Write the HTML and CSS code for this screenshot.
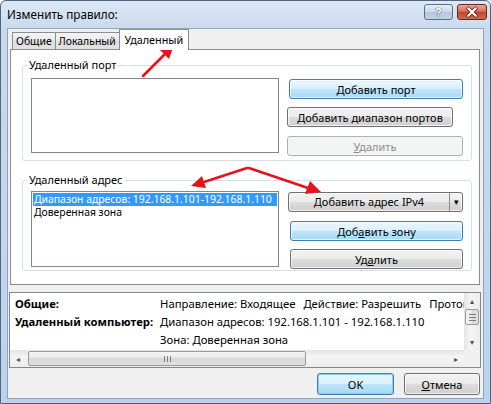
FILE: index.html
```html
<!DOCTYPE html>
<html lang="ru">
<head>
    <meta charset="UTF-8">
    <title>Изменить правило</title>
    <link rel="stylesheet" href="styles.css">
</head>
<body>
    <div class="window">
        <div class="titlebar">
            <span class="title">Изменить правило:</span>
            <div class="caption-buttons">
                <span class="cap-btn help">?</span>
                <span class="cap-btn close">
                    <svg width="30" height="16" viewBox="0 0 30 16">
                        <path d="M11 4 L19 12 M19 4 L11 12" stroke="#6b1d12" stroke-width="4.2" stroke-linecap="round"/>
                        <path d="M11 4 L19 12 M19 4 L11 12" stroke="#fff" stroke-width="2.4" stroke-linecap="round"/>
                    </svg>
                </span>
            </div>
        </div>

        <div class="client">
            <div class="tabs">
                <span class="tab">Общие</span>
                <span class="tab">Локальный</span>
                <span class="tab active">Удаленный</span>
            </div>

            <div class="tab-page">
                <fieldset class="group group-port">
                    <legend>Удаленный порт</legend>
                    <div class="group-body">
                        <div class="listbox"></div>
                        <div class="btn-col">
                            <button class="btn hot first">Добавить порт</button>
                            <button class="btn narrow"><u>Д</u>обавить диапазон портов</button>
                            <button class="btn last" disabled><u>У</u>далить</button>
                        </div>
                    </div>
                </fieldset>

                <fieldset class="group group-addr">
                    <legend>Удаленный адрес</legend>
                    <div class="group-body">
                        <div class="listbox">
                            <div class="item selected">Диапазон адресов: 192.168.1.101-192.168.1.110</div>
                            <div class="item">Доверенная зона</div>
                        </div>
                        <div class="btn-col">
                            <button class="btn split first">
                                <span class="split-main">Добавить адрес IPv4</span>
                                <span class="split-drop">&#9662;</span>
                            </button>
                            <button class="btn hot">Доб<u>а</u>вить зону</button>
                            <button class="btn last">Уд<u>а</u>лить</button>
                        </div>
                    </div>
                </fieldset>
            </div>

            <div class="summary">
                <div class="summary-rows">
                    <div class="row">
                        <span class="label">Общие:</span>
                        <span class="value">Направление: Входящее</span>
                        <span class="value">Действие: Разрешить</span>
                        <span class="value">Протокол: Любой</span>
                    </div>
                    <div class="row">
                        <span class="label">Удаленный компьютер:</span>
                        <span class="value">Диапазон адресов: 192.168.1.101 - 192.168.1.110</span>
                    </div>
                    <div class="row">
                        <span class="label"></span>
                        <span class="value">Зона: Доверенная зона</span>
                    </div>
                </div>
                <div class="vscroll">
                    <span class="arrow">&#9652;</span>
                    <span class="vthumb"><i></i><i></i><i></i></span>
                    <span class="vtrack"></span>
                    <span class="arrow">&#9662;</span>
                </div>
                <div class="hscroll">
                    <span class="arrow">&#9666;</span>
                    <span class="hthumb"><i></i><i></i><i></i></span>
                    <span class="htrack"></span>
                    <span class="arrow">&#9656;</span>
                </div>
                <div class="corner"></div>
            </div>

            <div class="dialog-buttons">
                <button class="btn hot ok">OK</button>
                <button class="btn cancel"><u>О</u>тмена</button>
            </div>
        </div>

        <!-- пометки поверх окна -->
        <svg class="marks" width="491" height="404" viewBox="0 0 491 404">
            <g stroke="#e3151b" stroke-width="2.6" stroke-linecap="round" fill="none">
                <path d="M143 76 L165 54"/>
                <path d="M247 168 L204 182"/>
                <path d="M249 168 L308 188"/>
            </g>
            <g fill="#e3151b">
                <polygon points="174,45 169,59 160,50"/>
                <polygon points="191,186 206,188 202,176"/>
                <polygon points="321,192 305,194 310,181"/>
            </g>
        </svg>
    </div>
</body>
</html>
```

FILE: styles.css
```css
* {
    box-sizing: border-box;
}
body {
    margin: 0;
    font-family: "Noto Sans", "Open Sans", sans-serif;
    font-size: 11px;
    color: #000;
    background: #fff;
}
.window {
    position: relative;
    width: 491px;
    height: 404px;
    display: flex;
    flex-direction: column;
    padding: 0 6px 4px 6px;
    border: 1px solid #4f6680;
    border-radius: 6px 6px 0 0;
    background: linear-gradient(#dde8f4, #c9daee 28px, #bcd2ec);
}

/* заголовок */
.titlebar {
    height: 27px;
    display: flex;
    justify-content: space-between;
    align-items: flex-start;
}
.title {
    font-size: 11.7px;
    line-height: 18px;
    padding-top: 4px;
}
.caption-buttons {
    display: flex;
    gap: 4px;
    margin-top: 3px;
    margin-right: -3px;
}
.cap-btn {
    height: 16px;
    border: 1px solid #5b6f87;
    border-radius: 3px;
    display: flex;
    align-items: center;
    justify-content: center;
}
.help {
    width: 29px;
    background: linear-gradient(#e6eef7, #c9d7e8 50%, #b4c6dd 50%, #c3d3e6);
    color: #fff;
    font-weight: bold;
    font-size: 12px;
    text-shadow: 0 0 1px #2d3e55, 0 0 1px #2d3e55;
}
.close {
    width: 30px;
    border-color: #6a2318;
    background: linear-gradient(#e9a99c, #d5725d 45%, #c4432c 50%, #d26a50);
}

/* рабочая область */
.client {
    flex: 1;
    display: flex;
    flex-direction: column;
    padding: 0 3px 3px 2px;
    background: #f0f0f0;
    border: 1px solid #8ea4bd;
}
.tabs {
    height: 20px;
    display: flex;
    align-items: flex-end;
    padding-left: 2px;
}
.tab {
    height: 17px;
    line-height: 16px;
    padding: 0 3px;
    margin-right: -1px;
    font-size: 10.4px;
    border: 1px solid #898c95;
    border-bottom: none;
    background: linear-gradient(#f4f4f4, #e9e9e9 50%, #dedede 50%, #e2e2e2);
}
.tab.active {
    position: relative;
    z-index: 1;
    height: 21px;
    margin-bottom: -1px;
    padding: 0 5px;
    line-height: 19px;
    font-size: 10.8px;
    background: #fff;
}
.tab-page {
    height: 236px;
    display: flex;
    flex-direction: column;
    gap: 11px;
    padding: 7px 7px 0 11px;
    background: #fff;
    border: 1px solid #898c95;
}

/* группы */
.group {
    margin: 0;
    min-width: 0;
    padding: 0 8px;
    border: 1px solid #d5dfe5;
    border-radius: 3px;
}
.group legend {
    font-size: 11px;
    line-height: 16px;
    padding: 0 2px;
    margin-left: -4px;
}
.group-port {
    padding-top: 5px;
    padding-bottom: 4px;
}
.group-addr {
    padding-top: 3px;
    padding-bottom: 1px;
}
.group-body {
    height: 78px;
    display: flex;
}
.listbox {
    width: 248px;
    height: 75px;
    padding: 1px;
    overflow: hidden;
    background: #fff;
    border: 1px solid #828790;
}
.group-addr .listbox {
    height: 76px;
}
.item {
    height: 13px;
    line-height: 13px;
    padding-left: 1px;
    font-size: 10.4px;
    white-space: nowrap;
}
.item.selected {
    background: #3399ff;
    color: #fff;
}
.btn-col {
    width: 176px;
    margin-left: 8px;
    display: flex;
    flex-direction: column;
}
.group-addr .btn-col {
    width: 173px;
    margin-left: 11px;
}

/* кнопки */
.btn {
    height: 20px;
    padding: 0;
    font: inherit;
    color: #000;
    border: 1px solid #707070;
    border-radius: 3px;
    background: linear-gradient(#f2f2f2, #ebebeb 50%, #dddddd 50%, #cfcfcf);
    box-shadow: inset 0 0 0 1px rgba(255, 255, 255, 0.7);
}
.btn.hot {
    border-color: #3c7fb1;
    background: linear-gradient(#eaf6fd, #d9f0fc 50%, #bee6fd 50%, #a7d9f5);
}
.btn:disabled {
    color: #8c8c8c;
    border-color: #adb2b5;
    background: #f4f4f4;
    box-shadow: none;
}
.btn-col .btn + .btn {
    margin-top: 8px;
}
.btn-col .first {
    margin-top: 1px;
}
.group-port .first {
    margin-left: 2px;
}
.group-port .narrow {
    margin-right: 10px;
}
.group-port .last,
.group-addr .hot {
    margin-top: 9px !important;
}
.group-addr .first {
    margin-left: -2px;
}
.split {
    display: flex;
    align-items: stretch;
}
.split-main {
    flex: 1;
    line-height: 18px;
    text-align: center;
}
.split-drop {
    width: 13px;
    line-height: 18px;
    font-size: 9px;
    text-align: center;
    border-left: 1px solid #8a8a8a;
}

/* сводка */
.summary {
    height: 76px;
    margin: 7px -1px 0 -1px;
    display: grid;
    grid-template-columns: minmax(0, 1fr) 16px;
    grid-template-rows: minmax(0, 1fr) 17px;
    font-size: 11.3px;
    background: #fff;
    border: 1px solid #828790;
}
.summary-rows {
    overflow: hidden;
    padding: 1px 0 0 5px;
    white-space: nowrap;
}
.row {
    height: 18px;
    display: flex;
    align-items: center;
}
.label {
    flex: none;
    width: 145px;
    font-weight: bold;
}
.value {
    flex: none;
    margin-right: 8px;
}
.vscroll {
    display: flex;
    flex-direction: column;
    align-items: center;
    background: linear-gradient(90deg, #e4e4e4, #f4f4f4 40%, #ececec);
}
.hscroll {
    display: flex;
    align-items: center;
    background: linear-gradient(#e4e4e4, #f4f4f4 40%, #ececec);
}
.arrow {
    flex: none;
    width: 16px;
    height: 16px;
    line-height: 16px;
    font-size: 8px;
    text-align: center;
    color: #505050;
}
.vthumb,
.hthumb {
    display: flex;
    align-items: center;
    justify-content: center;
    gap: 2px;
    border: 1px solid #9a9a9a;
    border-radius: 2px;
}
.vthumb {
    width: 14px;
    height: 16px;
    flex-direction: column;
    background: linear-gradient(90deg, #f6f6f6, #e6e6e6 50%, #d8d8d8 50%, #e0e0e0);
}
.vthumb i {
    width: 7px;
    height: 1px;
    background: #7c7c7c;
}
.hthumb {
    width: 278px;
    height: 15px;
    margin-left: 2px;
    background: linear-gradient(#f6f6f6, #e6e6e6 50%, #d8d8d8 50%, #e0e0e0);
}
.hthumb i {
    width: 1px;
    height: 6px;
    background: #7c7c7c;
}
.vtrack,
.htrack {
    flex: 1;
}
.corner {
    background: #f0f0f0;
}

/* нижние кнопки */
.dialog-buttons {
    display: flex;
    justify-content: flex-end;
    gap: 10px;
    margin-top: 5px;
}
.dialog-buttons .btn {
    height: 22px;
}
.ok {
    width: 77px;
    box-shadow: inset 0 0 0 1px #7fd3f7;
}
.cancel {
    width: 76px;
}

.marks {
    position: absolute;
    top: -1px;
    left: -1px;
    pointer-events: none;
}
```
